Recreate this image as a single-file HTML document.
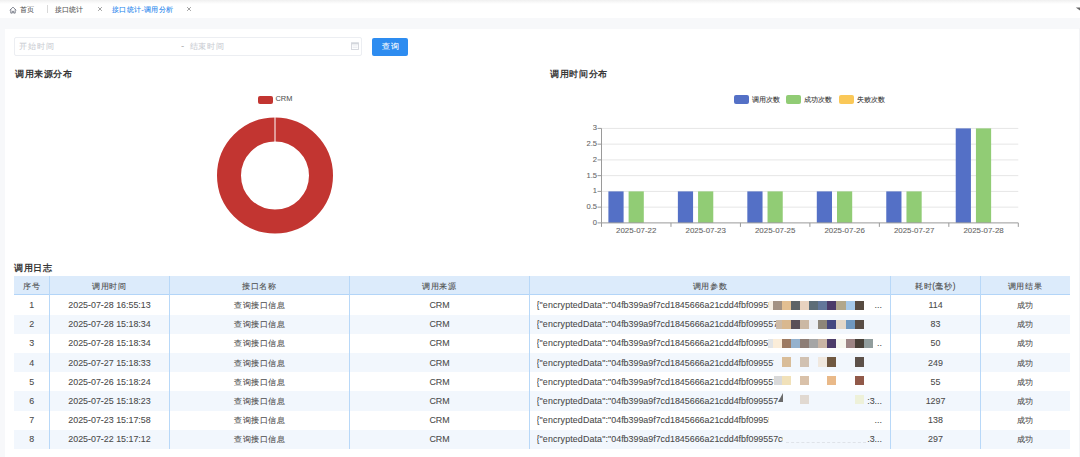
<!DOCTYPE html>
<html><head><meta charset="utf-8"><style>
html,body{margin:0;padding:0;}
body{width:1080px;height:457px;position:relative;overflow:hidden;background:#fff;font-family:"Liberation Sans", sans-serif;}
.t{position:absolute;white-space:nowrap;-webkit-text-stroke:0.08px currentColor;}
.r{position:absolute;box-sizing:border-box;}
</style></head><body>
<div class="r" style="left:0px;top:0px;width:1080px;height:18px;background:#ffffff;"></div><div class="r" style="left:0px;top:0px;width:1080px;height:4px;background:linear-gradient(#f0f0f0,#ffffff);"></div><div class="r" style="left:0px;top:18px;width:1080px;height:10.8px;background:#f7f8fa;"></div><div class="r" style="left:0px;top:28px;width:5px;height:429px;background:#f7f8fa;"></div><div class="r" style="left:5px;top:28.8px;width:1074px;height:429px;background:#ffffff;"></div><div class="r" style="left:1079px;top:28px;width:1px;height:429px;background:#f3f4f6;"></div><svg class="r" style="left:1074px;top:6px" width="6" height="6" viewBox="0 0 6 6"><path d="M1.8 1.6 L6 1.6 L6 4.6 Z" fill="#666"/></svg><svg class="r" style="left:9px;top:5.5px" width="8" height="8" viewBox="0 0 8 8"><path d="M0.8 4.3 L4 1.1 L7.2 4.3 M1.8 3.4 V7.1 H3.3 V5.3 H4.7 V7.1 H6.2 V3.4" fill="none" stroke="#5a5f6e" stroke-width="0.75"/></svg><div class="t" style="left:20px;top:3.8px;font-size:7.4px;line-height:12px;color:#555;font-weight:400;">首页</div><div class="r" style="left:47px;top:5px;width:0.8px;height:8px;background:#d8d8d8;"></div><div class="t" style="left:55px;top:3.8px;font-size:7.4px;line-height:12px;color:#555;font-weight:400;">接口统计</div><svg class="r" style="left:96.7px;top:6.199999999999999px" width="6" height="6" viewBox="0 0 6 6"><path d="M1.1 1.1L4.9 4.9M4.9 1.1L1.1 4.9" stroke="#8a8a8a" stroke-width="0.8"/></svg><div class="t" style="left:112px;top:3.8px;font-size:7.4px;line-height:12px;color:#2385ee;font-weight:400;letter-spacing:0.3px;">接口统计-调用分析</div><svg class="r" style="left:185.8px;top:6.199999999999999px" width="6" height="6" viewBox="0 0 6 6"><path d="M1.1 1.1L4.9 4.9M4.9 1.1L1.1 4.9" stroke="#8a8a8a" stroke-width="0.8"/></svg><div class="r" style="left:14px;top:36.8px;width:348.4px;height:19px;border:1px solid #eceef2;border-radius:2px;background:#fff"></div><div class="t" style="left:19.2px;top:40.2px;font-size:8.3px;line-height:12px;color:#cbced4;font-weight:400;letter-spacing:0.9px;">开始时间</div><div class="t" style="left:181.2px;top:40.2px;font-size:8.3px;line-height:12px;color:#b5b5b5;font-weight:400;">-</div><div class="t" style="left:189.5px;top:40.2px;font-size:8.3px;line-height:12px;color:#cbced4;font-weight:400;letter-spacing:0.9px;">结束时间</div><svg class="r" style="left:351px;top:42.2px" width="8" height="8" viewBox="0 0 8 8"><rect x="0.5" y="0.8" width="7" height="6.7" fill="none" stroke="#d3d6dc" stroke-width="0.9"/><rect x="0.5" y="0.8" width="7" height="1.6" fill="#d3d6dc"/><path d="M1.5 3.9H6.5M1.5 5.6H6.5" stroke="#dde0e5" stroke-width="0.6"/></svg><div class="r" style="left:372.3px;top:37.5px;width:35.7px;height:18px;background:#2d8cf0;border-radius:2px"></div><div class="t" style="left:372.8px;top:40.8px;font-size:8.2px;line-height:12px;color:#fff;font-weight:400;letter-spacing:0.5px;width:35.7px;text-align:center;">查询</div><div class="t" style="left:15px;top:68px;font-size:9.2px;line-height:12px;color:#383838;font-weight:700;letter-spacing:0.55px;-webkit-text-stroke:0;">调用来源分布</div><div class="t" style="left:550.4px;top:68px;font-size:9.2px;line-height:12px;color:#383838;font-weight:700;letter-spacing:0.55px;-webkit-text-stroke:0;">调用时间分布</div><div class="r" style="left:257.6px;top:95.5px;width:15.2px;height:8px;background:#c23531;border-radius:2px"></div><div class="t" style="left:275.5px;top:93.3px;font-size:7.4px;line-height:12px;color:#555;font-weight:400;">CRM</div><svg class="r" style="left:0;top:0" width="540" height="260"><circle cx="275" cy="175.6" r="46.0" fill="none" stroke="#c23531" stroke-width="24"/><line x1="275" y1="116.6" x2="275" y2="142.6" stroke="#fff" stroke-width="1"/></svg><div class="r" style="left:733.7px;top:95.3px;width:15px;height:8.4px;background:#5470c6;border-radius:2px"></div><div class="t" style="left:751.7px;top:93.5px;font-size:7.2px;line-height:12px;color:#333;font-weight:400;">调用次数</div><div class="r" style="left:786.3px;top:95.3px;width:15px;height:8.4px;background:#91cc75;border-radius:2px"></div><div class="t" style="left:804.3px;top:93.5px;font-size:7.2px;line-height:12px;color:#333;font-weight:400;">成功次数</div><div class="r" style="left:838.7px;top:95.3px;width:15px;height:8.4px;background:#fac858;border-radius:2px"></div><div class="t" style="left:856.7px;top:93.5px;font-size:7.2px;line-height:12px;color:#333;font-weight:400;">失败次数</div><svg class="r" style="left:0;top:0" width="1080" height="260"><line x1="597.5" y1="222.90" x2="601.5" y2="222.90" stroke="#9a9a9a" stroke-width="1"/><line x1="601.5" y1="207.15" x2="1018.3" y2="207.15" stroke="#e6e6e6" stroke-width="1"/><line x1="597.5" y1="207.15" x2="601.5" y2="207.15" stroke="#9a9a9a" stroke-width="1"/><line x1="601.5" y1="191.40" x2="1018.3" y2="191.40" stroke="#e6e6e6" stroke-width="1"/><line x1="597.5" y1="191.40" x2="601.5" y2="191.40" stroke="#9a9a9a" stroke-width="1"/><line x1="601.5" y1="175.65" x2="1018.3" y2="175.65" stroke="#e6e6e6" stroke-width="1"/><line x1="597.5" y1="175.65" x2="601.5" y2="175.65" stroke="#9a9a9a" stroke-width="1"/><line x1="601.5" y1="159.90" x2="1018.3" y2="159.90" stroke="#e6e6e6" stroke-width="1"/><line x1="597.5" y1="159.90" x2="601.5" y2="159.90" stroke="#9a9a9a" stroke-width="1"/><line x1="601.5" y1="144.15" x2="1018.3" y2="144.15" stroke="#e6e6e6" stroke-width="1"/><line x1="597.5" y1="144.15" x2="601.5" y2="144.15" stroke="#9a9a9a" stroke-width="1"/><line x1="601.5" y1="128.40" x2="1018.3" y2="128.40" stroke="#e6e6e6" stroke-width="1"/><line x1="597.5" y1="128.40" x2="601.5" y2="128.40" stroke="#9a9a9a" stroke-width="1"/><rect x="608.40" y="191.40" width="15.2" height="31.50" fill="#5470c6"/><rect x="628.60" y="191.40" width="15.2" height="31.50" fill="#91cc75"/><rect x="677.87" y="191.40" width="15.2" height="31.50" fill="#5470c6"/><rect x="698.07" y="191.40" width="15.2" height="31.50" fill="#91cc75"/><rect x="747.33" y="191.40" width="15.2" height="31.50" fill="#5470c6"/><rect x="767.53" y="191.40" width="15.2" height="31.50" fill="#91cc75"/><rect x="816.80" y="191.40" width="15.2" height="31.50" fill="#5470c6"/><rect x="837.00" y="191.40" width="15.2" height="31.50" fill="#91cc75"/><rect x="886.27" y="191.40" width="15.2" height="31.50" fill="#5470c6"/><rect x="906.47" y="191.40" width="15.2" height="31.50" fill="#91cc75"/><rect x="955.73" y="128.40" width="15.2" height="94.50" fill="#5470c6"/><rect x="975.93" y="128.40" width="15.2" height="94.50" fill="#91cc75"/><line x1="601.50" y1="222.9" x2="601.50" y2="226.9" stroke="#9a9a9a" stroke-width="1"/><line x1="670.97" y1="222.9" x2="670.97" y2="226.9" stroke="#9a9a9a" stroke-width="1"/><line x1="740.43" y1="222.9" x2="740.43" y2="226.9" stroke="#9a9a9a" stroke-width="1"/><line x1="809.90" y1="222.9" x2="809.90" y2="226.9" stroke="#9a9a9a" stroke-width="1"/><line x1="879.37" y1="222.9" x2="879.37" y2="226.9" stroke="#9a9a9a" stroke-width="1"/><line x1="948.83" y1="222.9" x2="948.83" y2="226.9" stroke="#9a9a9a" stroke-width="1"/><line x1="1018.30" y1="222.9" x2="1018.30" y2="226.9" stroke="#9a9a9a" stroke-width="1"/><line x1="601.5" y1="128.4" x2="601.5" y2="222.9" stroke="#9a9a9a" stroke-width="1"/><line x1="601.5" y1="222.9" x2="1018.3" y2="222.9" stroke="#9a9a9a" stroke-width="1"/></svg><div class="t" style="left:559.1px;top:216.9px;font-size:7.6px;line-height:12px;color:#666;font-weight:400;width:38px;text-align:right;">0</div><div class="t" style="left:559.1px;top:201.15px;font-size:7.6px;line-height:12px;color:#666;font-weight:400;width:38px;text-align:right;">0.5</div><div class="t" style="left:559.1px;top:185.4px;font-size:7.6px;line-height:12px;color:#666;font-weight:400;width:38px;text-align:right;">1</div><div class="t" style="left:559.1px;top:169.65px;font-size:7.6px;line-height:12px;color:#666;font-weight:400;width:38px;text-align:right;">1.5</div><div class="t" style="left:559.1px;top:153.9px;font-size:7.6px;line-height:12px;color:#666;font-weight:400;width:38px;text-align:right;">2</div><div class="t" style="left:559.1px;top:138.15px;font-size:7.6px;line-height:12px;color:#666;font-weight:400;width:38px;text-align:right;">2.5</div><div class="t" style="left:559.1px;top:122.4px;font-size:7.6px;line-height:12px;color:#666;font-weight:400;width:38px;text-align:right;">3</div><div class="t" style="left:596.2333333333333px;top:225.4px;font-size:7.9px;line-height:12px;color:#666;font-weight:400;width:80px;text-align:center;">2025-07-22</div><div class="t" style="left:665.7px;top:225.4px;font-size:7.9px;line-height:12px;color:#666;font-weight:400;width:80px;text-align:center;">2025-07-23</div><div class="t" style="left:735.1666666666666px;top:225.4px;font-size:7.9px;line-height:12px;color:#666;font-weight:400;width:80px;text-align:center;">2025-07-25</div><div class="t" style="left:804.6333333333333px;top:225.4px;font-size:7.9px;line-height:12px;color:#666;font-weight:400;width:80px;text-align:center;">2025-07-26</div><div class="t" style="left:874.0999999999999px;top:225.4px;font-size:7.9px;line-height:12px;color:#666;font-weight:400;width:80px;text-align:center;">2025-07-27</div><div class="t" style="left:943.5666666666666px;top:225.4px;font-size:7.9px;line-height:12px;color:#666;font-weight:400;width:80px;text-align:center;">2025-07-28</div><div class="t" style="left:14.2px;top:261.5px;font-size:9.2px;line-height:12px;color:#383838;font-weight:700;letter-spacing:0.55px;-webkit-text-stroke:0;">调用日志</div><div class="r" style="left:14px;top:276.3px;width:1055.5px;height:19.18px;background:#dcebfb;"></div><div class="r" style="left:14px;top:314.66px;width:1055.5px;height:19.18px;background:#f2f7fd;"></div><div class="r" style="left:14px;top:353.02px;width:1055.5px;height:19.18px;background:#f2f7fd;"></div><div class="r" style="left:14px;top:391.38px;width:1055.5px;height:19.18px;background:#f2f7fd;"></div><div class="r" style="left:14px;top:429.74px;width:1055.5px;height:19.18px;background:#f2f7fd;"></div><div class="r" style="left:14px;top:294.48px;width:1055.5px;height:1px;background:#b3d5f8;"></div><div class="r" style="left:49.0px;top:276.3px;width:1px;height:172.62px;background:#b8d8f8;"></div><div class="r" style="left:169.0px;top:276.3px;width:1px;height:172.62px;background:#b8d8f8;"></div><div class="r" style="left:349.0px;top:276.3px;width:1px;height:172.62px;background:#b8d8f8;"></div><div class="r" style="left:529.0px;top:276.3px;width:1px;height:172.62px;background:#b8d8f8;"></div><div class="r" style="left:890.0px;top:276.3px;width:1px;height:172.62px;background:#b8d8f8;"></div><div class="r" style="left:980.0px;top:276.3px;width:1px;height:172.62px;background:#b8d8f8;"></div><div class="t" style="left:14px;top:277.1px;font-size:8.2px;line-height:19.18px;color:#4a4a4a;font-weight:400;letter-spacing:0.6px;width:35.5px;text-align:center;">序号</div><div class="t" style="left:49.5px;top:277.1px;font-size:8.2px;line-height:19.18px;color:#4a4a4a;font-weight:400;letter-spacing:0.6px;width:120.0px;text-align:center;">调用时间</div><div class="t" style="left:169.5px;top:277.1px;font-size:8.2px;line-height:19.18px;color:#4a4a4a;font-weight:400;letter-spacing:0.6px;width:180.0px;text-align:center;">接口名称</div><div class="t" style="left:349.5px;top:277.1px;font-size:8.2px;line-height:19.18px;color:#4a4a4a;font-weight:400;letter-spacing:0.6px;width:180.0px;text-align:center;">调用来源</div><div class="t" style="left:529.5px;top:277.1px;font-size:8.2px;line-height:19.18px;color:#4a4a4a;font-weight:400;letter-spacing:0.6px;width:361.0px;text-align:center;">调用参数</div><div class="t" style="left:890.5px;top:277.1px;font-size:8.2px;line-height:19.18px;color:#4a4a4a;font-weight:400;letter-spacing:0.6px;width:90.0px;text-align:center;">耗时(毫秒)</div><div class="t" style="left:980.5px;top:277.1px;font-size:8.2px;line-height:19.18px;color:#4a4a4a;font-weight:400;letter-spacing:0.6px;width:89.0px;text-align:center;">调用结果</div><div class="t" style="left:14px;top:295.98px;font-size:8.9px;line-height:19.18px;color:#4a4a4a;font-weight:400;width:35.5px;text-align:center;">1</div><div class="t" style="left:49.5px;top:295.98px;font-size:8.9px;line-height:19.18px;color:#4a4a4a;font-weight:400;width:120.0px;text-align:center;">2025-07-28 16:55:13</div><div class="t" style="left:169.5px;top:295.98px;font-size:8.2px;line-height:19.18px;color:#4a4a4a;font-weight:400;letter-spacing:0.5px;width:180.0px;text-align:center;">查询接口信息</div><div class="t" style="left:349.5px;top:295.98px;font-size:8.9px;line-height:19.18px;color:#4a4a4a;font-weight:400;width:180.0px;text-align:center;">CRM</div><div class="t" style="left:890.5px;top:295.98px;font-size:8.9px;line-height:19.18px;color:#4a4a4a;font-weight:400;width:90.0px;text-align:center;">114</div><div class="t" style="left:980.5px;top:295.98px;font-size:8.2px;line-height:19.18px;color:#4a4a4a;font-weight:400;letter-spacing:0.5px;width:89.0px;text-align:center;">成功</div><div class="t" style="left:14px;top:315.16px;font-size:8.9px;line-height:19.18px;color:#4a4a4a;font-weight:400;width:35.5px;text-align:center;">2</div><div class="t" style="left:49.5px;top:315.16px;font-size:8.9px;line-height:19.18px;color:#4a4a4a;font-weight:400;width:120.0px;text-align:center;">2025-07-28 15:18:34</div><div class="t" style="left:169.5px;top:315.16px;font-size:8.2px;line-height:19.18px;color:#4a4a4a;font-weight:400;letter-spacing:0.5px;width:180.0px;text-align:center;">查询接口信息</div><div class="t" style="left:349.5px;top:315.16px;font-size:8.9px;line-height:19.18px;color:#4a4a4a;font-weight:400;width:180.0px;text-align:center;">CRM</div><div class="t" style="left:890.5px;top:315.16px;font-size:8.9px;line-height:19.18px;color:#4a4a4a;font-weight:400;width:90.0px;text-align:center;">83</div><div class="t" style="left:980.5px;top:315.16px;font-size:8.2px;line-height:19.18px;color:#4a4a4a;font-weight:400;letter-spacing:0.5px;width:89.0px;text-align:center;">成功</div><div class="t" style="left:14px;top:334.34000000000003px;font-size:8.9px;line-height:19.18px;color:#4a4a4a;font-weight:400;width:35.5px;text-align:center;">3</div><div class="t" style="left:49.5px;top:334.34000000000003px;font-size:8.9px;line-height:19.18px;color:#4a4a4a;font-weight:400;width:120.0px;text-align:center;">2025-07-28 15:18:34</div><div class="t" style="left:169.5px;top:334.34000000000003px;font-size:8.2px;line-height:19.18px;color:#4a4a4a;font-weight:400;letter-spacing:0.5px;width:180.0px;text-align:center;">查询接口信息</div><div class="t" style="left:349.5px;top:334.34000000000003px;font-size:8.9px;line-height:19.18px;color:#4a4a4a;font-weight:400;width:180.0px;text-align:center;">CRM</div><div class="t" style="left:890.5px;top:334.34000000000003px;font-size:8.9px;line-height:19.18px;color:#4a4a4a;font-weight:400;width:90.0px;text-align:center;">50</div><div class="t" style="left:980.5px;top:334.34000000000003px;font-size:8.2px;line-height:19.18px;color:#4a4a4a;font-weight:400;letter-spacing:0.5px;width:89.0px;text-align:center;">成功</div><div class="t" style="left:14px;top:353.52px;font-size:8.9px;line-height:19.18px;color:#4a4a4a;font-weight:400;width:35.5px;text-align:center;">4</div><div class="t" style="left:49.5px;top:353.52px;font-size:8.9px;line-height:19.18px;color:#4a4a4a;font-weight:400;width:120.0px;text-align:center;">2025-07-27 15:18:33</div><div class="t" style="left:169.5px;top:353.52px;font-size:8.2px;line-height:19.18px;color:#4a4a4a;font-weight:400;letter-spacing:0.5px;width:180.0px;text-align:center;">查询接口信息</div><div class="t" style="left:349.5px;top:353.52px;font-size:8.9px;line-height:19.18px;color:#4a4a4a;font-weight:400;width:180.0px;text-align:center;">CRM</div><div class="t" style="left:890.5px;top:353.52px;font-size:8.9px;line-height:19.18px;color:#4a4a4a;font-weight:400;width:90.0px;text-align:center;">249</div><div class="t" style="left:980.5px;top:353.52px;font-size:8.2px;line-height:19.18px;color:#4a4a4a;font-weight:400;letter-spacing:0.5px;width:89.0px;text-align:center;">成功</div><div class="t" style="left:14px;top:372.70000000000005px;font-size:8.9px;line-height:19.18px;color:#4a4a4a;font-weight:400;width:35.5px;text-align:center;">5</div><div class="t" style="left:49.5px;top:372.70000000000005px;font-size:8.9px;line-height:19.18px;color:#4a4a4a;font-weight:400;width:120.0px;text-align:center;">2025-07-26 15:18:24</div><div class="t" style="left:169.5px;top:372.70000000000005px;font-size:8.2px;line-height:19.18px;color:#4a4a4a;font-weight:400;letter-spacing:0.5px;width:180.0px;text-align:center;">查询接口信息</div><div class="t" style="left:349.5px;top:372.70000000000005px;font-size:8.9px;line-height:19.18px;color:#4a4a4a;font-weight:400;width:180.0px;text-align:center;">CRM</div><div class="t" style="left:890.5px;top:372.70000000000005px;font-size:8.9px;line-height:19.18px;color:#4a4a4a;font-weight:400;width:90.0px;text-align:center;">55</div><div class="t" style="left:980.5px;top:372.70000000000005px;font-size:8.2px;line-height:19.18px;color:#4a4a4a;font-weight:400;letter-spacing:0.5px;width:89.0px;text-align:center;">成功</div><div class="t" style="left:14px;top:391.88px;font-size:8.9px;line-height:19.18px;color:#4a4a4a;font-weight:400;width:35.5px;text-align:center;">6</div><div class="t" style="left:49.5px;top:391.88px;font-size:8.9px;line-height:19.18px;color:#4a4a4a;font-weight:400;width:120.0px;text-align:center;">2025-07-25 15:18:23</div><div class="t" style="left:169.5px;top:391.88px;font-size:8.2px;line-height:19.18px;color:#4a4a4a;font-weight:400;letter-spacing:0.5px;width:180.0px;text-align:center;">查询接口信息</div><div class="t" style="left:349.5px;top:391.88px;font-size:8.9px;line-height:19.18px;color:#4a4a4a;font-weight:400;width:180.0px;text-align:center;">CRM</div><div class="t" style="left:890.5px;top:391.88px;font-size:8.9px;line-height:19.18px;color:#4a4a4a;font-weight:400;width:90.0px;text-align:center;">1297</div><div class="t" style="left:980.5px;top:391.88px;font-size:8.2px;line-height:19.18px;color:#4a4a4a;font-weight:400;letter-spacing:0.5px;width:89.0px;text-align:center;">成功</div><div class="t" style="left:14px;top:411.06px;font-size:8.9px;line-height:19.18px;color:#4a4a4a;font-weight:400;width:35.5px;text-align:center;">7</div><div class="t" style="left:49.5px;top:411.06px;font-size:8.9px;line-height:19.18px;color:#4a4a4a;font-weight:400;width:120.0px;text-align:center;">2025-07-23 15:17:58</div><div class="t" style="left:169.5px;top:411.06px;font-size:8.2px;line-height:19.18px;color:#4a4a4a;font-weight:400;letter-spacing:0.5px;width:180.0px;text-align:center;">查询接口信息</div><div class="t" style="left:349.5px;top:411.06px;font-size:8.9px;line-height:19.18px;color:#4a4a4a;font-weight:400;width:180.0px;text-align:center;">CRM</div><div class="t" style="left:890.5px;top:411.06px;font-size:8.9px;line-height:19.18px;color:#4a4a4a;font-weight:400;width:90.0px;text-align:center;">138</div><div class="t" style="left:980.5px;top:411.06px;font-size:8.2px;line-height:19.18px;color:#4a4a4a;font-weight:400;letter-spacing:0.5px;width:89.0px;text-align:center;">成功</div><div class="t" style="left:14px;top:430.24px;font-size:8.9px;line-height:19.18px;color:#4a4a4a;font-weight:400;width:35.5px;text-align:center;">8</div><div class="t" style="left:49.5px;top:430.24px;font-size:8.9px;line-height:19.18px;color:#4a4a4a;font-weight:400;width:120.0px;text-align:center;">2025-07-22 15:17:12</div><div class="t" style="left:169.5px;top:430.24px;font-size:8.2px;line-height:19.18px;color:#4a4a4a;font-weight:400;letter-spacing:0.5px;width:180.0px;text-align:center;">查询接口信息</div><div class="t" style="left:349.5px;top:430.24px;font-size:8.9px;line-height:19.18px;color:#4a4a4a;font-weight:400;width:180.0px;text-align:center;">CRM</div><div class="t" style="left:890.5px;top:430.24px;font-size:8.9px;line-height:19.18px;color:#4a4a4a;font-weight:400;width:90.0px;text-align:center;">297</div><div class="t" style="left:980.5px;top:430.24px;font-size:8.2px;line-height:19.18px;color:#4a4a4a;font-weight:400;letter-spacing:0.5px;width:89.0px;text-align:center;">成功</div><div class="t" style="left:536.5px;top:295.98px;width:232.9px;overflow:hidden;font-size:8.9px;line-height:19.18px;color:#4a4a4a"><span style="letter-spacing:0.12px">{"encryptedData":"</span>04fb399a9f7cd1845666a21cdd4fbf099557c0a1b2c3d4e5f6</div><div class="r" style="left:769.40px;top:301.20px;width:3.60px;height:9.1px;background:#f5eee2"></div><div class="r" style="left:773.00px;top:301.20px;width:9.07px;height:9.1px;background:#a39283"></div><div class="r" style="left:782.07px;top:301.20px;width:9.07px;height:9.1px;background:#e3bf91"></div><div class="r" style="left:791.14px;top:301.20px;width:9.07px;height:9.1px;background:#5e6366"></div><div class="r" style="left:800.21px;top:301.20px;width:9.07px;height:9.1px;background:#e8d2bf"></div><div class="r" style="left:809.28px;top:301.20px;width:9.07px;height:9.1px;background:#5d6d77"></div><div class="r" style="left:818.35px;top:301.20px;width:9.07px;height:9.1px;background:#62779a"></div><div class="r" style="left:827.42px;top:301.20px;width:9.07px;height:9.1px;background:#4b3b69"></div><div class="r" style="left:836.49px;top:301.20px;width:9.07px;height:9.1px;background:#b1a78b"></div><div class="r" style="left:845.56px;top:301.20px;width:9.07px;height:9.1px;background:#a6c9e9"></div><div class="r" style="left:854.63px;top:301.20px;width:9.07px;height:9.1px;background:#574b41"></div><div class="t" style="left:800px;top:295.98px;width:82px;text-align:right;font-size:8.9px;line-height:19.18px;color:#4a4a4a">...</div><div class="t" style="left:536.5px;top:315.16px;width:239.5px;overflow:hidden;font-size:8.9px;line-height:19.18px;color:#4a4a4a"><span style="letter-spacing:0.12px">{"encryptedData":"</span>04fb399a9f7cd1845666a21cdd4fbf099557c0a1b2c3d4e5f6</div><div class="r" style="left:776.00px;top:319.95px;width:6.07px;height:9.1px;background:#cdbba8"></div><div class="r" style="left:782.07px;top:319.95px;width:9.07px;height:9.1px;background:#d9b88f"></div><div class="r" style="left:791.14px;top:319.95px;width:9.07px;height:9.1px;background:#5a5058"></div><div class="r" style="left:800.21px;top:319.95px;width:9.07px;height:9.1px;background:#cbb8a4"></div><div class="r" style="left:809.28px;top:319.95px;width:9.07px;height:9.1px;background:#eceef3"></div><div class="r" style="left:818.35px;top:319.95px;width:9.07px;height:9.1px;background:#8d8579"></div><div class="r" style="left:827.42px;top:319.95px;width:9.07px;height:9.1px;background:#45477f"></div><div class="r" style="left:836.49px;top:319.95px;width:9.07px;height:9.1px;background:#e3d8c9"></div><div class="r" style="left:845.56px;top:319.95px;width:9.07px;height:9.1px;background:#6f98c0"></div><div class="r" style="left:854.63px;top:319.95px;width:9.07px;height:9.1px;background:#594d45"></div><div class="t" style="left:536.5px;top:334.34px;width:231.8px;overflow:hidden;font-size:8.9px;line-height:19.18px;color:#4a4a4a"><span style="letter-spacing:0.12px">{"encryptedData":"</span>04fb399a9f7cd1845666a21cdd4fbf099557c0a1b2c3d4e5f6</div><div class="r" style="left:768.30px;top:338.70px;width:4.70px;height:9.1px;background:#e2e4e6"></div><div class="r" style="left:773.00px;top:338.70px;width:9.07px;height:9.1px;background:#fbedd9"></div><div class="r" style="left:782.07px;top:338.70px;width:9.07px;height:9.1px;background:#9d7a61"></div><div class="r" style="left:791.14px;top:338.70px;width:9.07px;height:9.1px;background:#94b1cd"></div><div class="r" style="left:800.21px;top:338.70px;width:9.07px;height:9.1px;background:#8d7d75"></div><div class="r" style="left:809.28px;top:338.70px;width:9.07px;height:9.1px;background:#a5a5a5"></div><div class="r" style="left:818.35px;top:338.70px;width:9.07px;height:9.1px;background:#c9b5a5"></div><div class="r" style="left:827.42px;top:338.70px;width:9.07px;height:9.1px;background:#4d3d69"></div><div class="r" style="left:836.49px;top:338.70px;width:9.07px;height:9.1px;background:#f7f7ef"></div><div class="r" style="left:845.56px;top:338.70px;width:9.07px;height:9.1px;background:#9d8585"></div><div class="r" style="left:854.63px;top:338.70px;width:9.07px;height:9.1px;background:#494139"></div><div class="r" style="left:863.70px;top:338.70px;width:9.07px;height:9.1px;background:#919d9d"></div><div class="t" style="left:800px;top:334.34px;width:82px;text-align:right;font-size:8.9px;line-height:19.18px;color:#4a4a4a">..</div><div class="t" style="left:536.5px;top:353.52px;width:237.4px;overflow:hidden;font-size:8.9px;line-height:19.18px;color:#4a4a4a"><span style="letter-spacing:0.12px">{"encryptedData":"</span>04fb399a9f7cd1845666a21cdd4fbf099557c0a1b2c3d4e5f6</div><div class="r" style="left:782.07px;top:357.45px;width:9.07px;height:9.1px;background:#d9bd99"></div><div class="r" style="left:800.21px;top:357.45px;width:9.07px;height:9.1px;background:#d1c1b1"></div><div class="r" style="left:818.35px;top:357.45px;width:9.07px;height:9.1px;background:#f0e8df"></div><div class="r" style="left:827.42px;top:357.45px;width:9.07px;height:9.1px;background:#715941"></div><div class="r" style="left:854.63px;top:357.45px;width:9.07px;height:9.1px;background:#5d5149"></div><div class="t" style="left:536.5px;top:372.70px;width:237.4px;overflow:hidden;font-size:8.9px;line-height:19.18px;color:#4a4a4a"><span style="letter-spacing:0.12px">{"encryptedData":"</span>04fb399a9f7cd1845666a21cdd4fbf099557c0a1b2c3d4e5f6</div><div class="r" style="left:773.90px;top:376.20px;width:8.17px;height:9.1px;background:#d9d9d9"></div><div class="r" style="left:782.07px;top:376.20px;width:9.07px;height:9.1px;background:#f1e1b9"></div><div class="r" style="left:800.21px;top:376.20px;width:9.07px;height:9.1px;background:#d9c1a9"></div><div class="r" style="left:827.42px;top:376.20px;width:9.07px;height:9.1px;background:#e9b989"></div><div class="r" style="left:854.63px;top:376.20px;width:9.07px;height:9.1px;background:#915949"></div><div class="t" style="left:536.5px;top:391.88px;width:241.3px;overflow:hidden;font-size:8.9px;line-height:19.18px;color:#4a4a4a"><span style="letter-spacing:0.12px">{"encryptedData":"</span>04fb399a9f7cd1845666a21cdd4fbf099557c0a1b2c3d4e5f6</div><div class="r" style="left:800.21px;top:394.95px;width:9.07px;height:9.1px;background:#e1d9d1"></div><div class="r" style="left:854.63px;top:394.95px;width:9.07px;height:9.1px;background:#eef1d9"></div><div class="t" style="left:800px;top:391.88px;width:82px;text-align:right;font-size:8.9px;line-height:19.18px;color:#4a4a4a">:3...</div><div class="t" style="left:536.5px;top:411.06px;width:232.4px;overflow:hidden;font-size:8.9px;line-height:19.18px;color:#4a4a4a"><span style="letter-spacing:0.12px">{"encryptedData":"</span>04fb399a9f7cd1845666a21cdd4fbf099557c0a1b2c3d4e5f6</div><div class="t" style="left:800px;top:411.06px;width:82px;text-align:right;font-size:8.9px;line-height:19.18px;color:#4a4a4a">...</div><div class="t" style="left:536.5px;top:430.24px;width:246.3px;overflow:hidden;font-size:8.9px;line-height:19.18px;color:#4a4a4a"><span style="letter-spacing:0.12px">{"encryptedData":"</span>04fb399a9f7cd1845666a21cdd4fbf099557c0a1b2c3d4e5f6</div><div class="t" style="left:800px;top:430.24px;width:82px;text-align:right;font-size:8.9px;line-height:19.18px;color:#4a4a4a">.3...</div><div class="r" style="left:786px;top:441.94px;width:80px;height:0;border-top:1px dashed #dfe3e9"></div><svg class="r" style="left:777.5px;top:392.98px" width="5" height="9" viewBox="0 0 5 9"><path d="M0 9 L5 0 L5 9 Z" fill="#6a6a6a"/></svg>
</body></html>
